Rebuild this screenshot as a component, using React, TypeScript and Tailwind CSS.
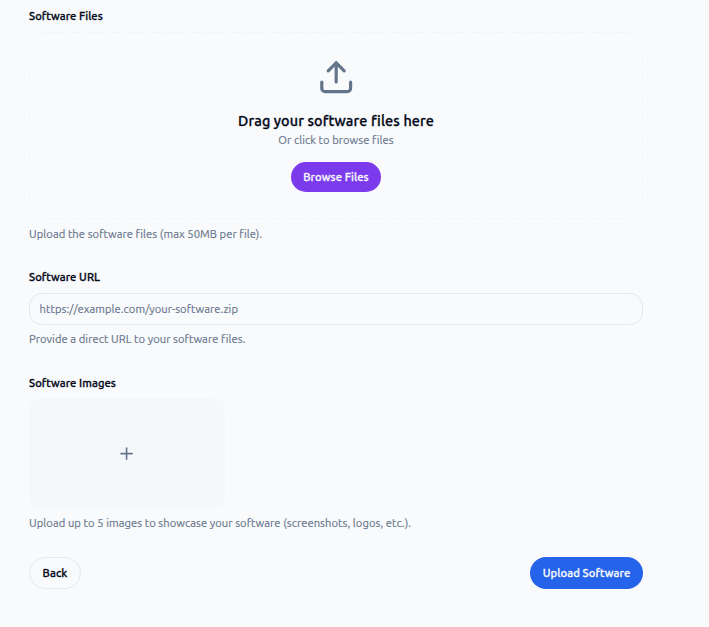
import type { ReactNode } from "react";
import { Plus } from "lucide-react";

function Label({ children, className = "" }: { children: ReactNode; className?: string }) {
  return (
    <div className={`h-4 whitespace-nowrap text-[11.2px] font-medium leading-4 tracking-[0.06px] text-[#020817] [-webkit-text-stroke:0.3px] ${className}`}>
      {children}
    </div>
  );
}

function Hint({ children, className = "" }: { children: ReactNode; className?: string }) {
  return (
    <p className={`h-4 whitespace-nowrap text-[11.2px] leading-4 tracking-[0.055px] text-[#64748b] [-webkit-text-stroke:0.15px] ${className}`}>{children}</p>
  );
}

function UploadIcon() {
  return (
    <svg
      className="size-[38.4px] text-[#64748b]"
      viewBox="0 0 24 24"
      fill="none"
      stroke="currentColor"
      strokeWidth="2"
      strokeLinecap="round"
      strokeLinejoin="round"
    >
      <path d="M21 15v4a2 2 0 0 1-2 2H5a2 2 0 0 1-2-2v-4" />
      <polyline points="17 8 12 3 7 8" />
      <line x1="12" x2="12" y1="3" y2="15" />
    </svg>
  );
}

export default function App() {
  return (
    <main className="h-[627px] w-full overflow-hidden bg-[#f9fafc] pl-[29px] pt-2 font-['Ubuntu','Noto_Sans',sans-serif]">
      <div className="flex w-[614px] flex-col">
        <section>
          <Label>Software Files</Label>
          <div className="mt-2 flex h-[187px] flex-col items-center rounded-[13px] border border-dashed border-[#f1f3f6] pt-[24.8px]">
            <UploadIcon />
            <h3 className="mt-[13.8px] h-[22px] whitespace-nowrap text-[14.4px] font-medium leading-[22px] tracking-[0.12px] text-[#020817] [-webkit-text-stroke:0.3px]">
              Drag your software files here
            </h3>
            <Hint>Or click to browse files</Hint>
            <button className="mt-[14px] flex h-[30px] w-[90px] items-center justify-center whitespace-nowrap rounded-full bg-[#7c3aed] text-[11.2px] font-medium tracking-[0.1px] text-[#f8fafc] [-webkit-text-stroke:0.3px]">
              Browse Files
            </button>
          </div>
          <Hint className="mt-[7px]">Upload the software files (max 50MB per file).</Hint>
        </section>

        <section className="mt-[27px]">
          <Label>Software URL</Label>
          <input
            type="text"
            placeholder="https://example.com/your-software.zip"
            className="mt-2 block h-8 w-full rounded-[13px] border border-[#e2e8f0] bg-transparent px-[9.6px] text-[11.2px] tracking-[0.06px] outline-none [-webkit-text-stroke:0.15px] placeholder:text-[#64748b]"
          />
          <Hint className="mt-[6px]">Provide a direct URL to your software files.</Hint>
        </section>

        <section className="mt-7">
          <Label>Software Images</Label>
          <button className="mt-[7px] flex h-[111px] w-[196px] items-center justify-center rounded-[13px] bg-[#f4f8fb] text-[#64748b]">
            <Plus className="size-[19.2px]" />
          </button>
          <Hint className="mt-[6px]">Upload up to 5 images to showcase your software (screenshots, logos, etc.).</Hint>
        </section>

        <footer className="mt-[26px] flex justify-between text-[11.2px] font-medium tracking-[0.1px] [-webkit-text-stroke:0.3px]">
          <button className="flex h-8 w-[52px] items-center justify-center rounded-full border border-[#e2e8f0] text-[#020817]">
            Back
          </button>
          <button className="flex h-8 w-[113px] items-center justify-center whitespace-nowrap rounded-full bg-[#2563eb] text-[#f8fafc]">
            Upload Software
          </button>
        </footer>
      </div>
    </main>
  );
}
